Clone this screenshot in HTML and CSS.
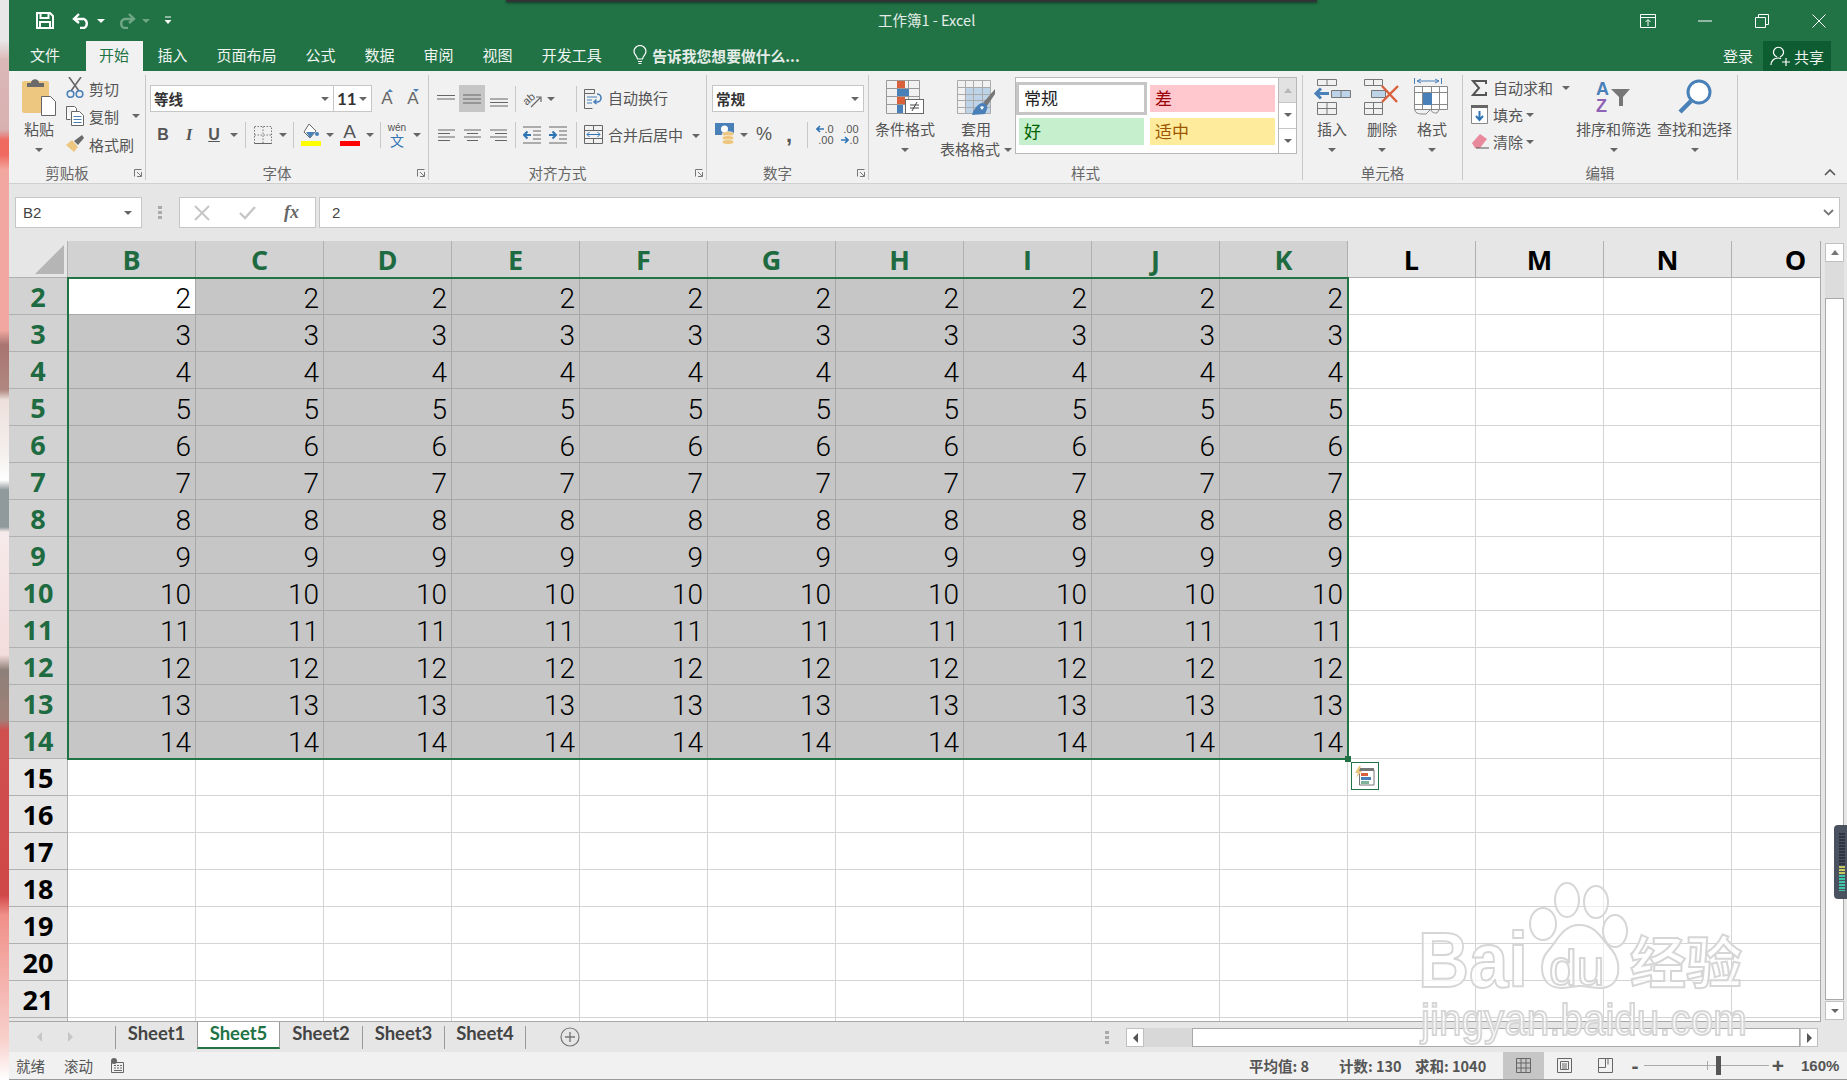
FILE: index.html
```html
<!DOCTYPE html>
<html lang="zh-CN">
<head>
  <meta charset="UTF-8" />
  <title>工作簿1 - Excel</title>
  <link rel="stylesheet" href="styles.css">
</head>
<body>
  <div class="desktop-strip"></div>

  <div class="app">
    <div class="titlebar">
      <div class="qat">
        <svg class="qat-save" width="18" height="17" viewBox="0 0 18 17"><path d="M1 1h13l3 3v12H1z M4.500 1v5h8V1 M4 16v-6h10v6" fill="none" stroke="#fff" stroke-width="2"/></svg>
        <svg class="qat-undo" width="19" height="16" viewBox="0 0 19 16"><path d="M7 1L2 6l5 4M3 6h9a5 5 0 0 1 0 9H8" fill="none" stroke="#fff" stroke-width="2.400"/></svg>
        <span class="caret caret-white qat-caret"></span>
        <svg class="qat-redo" width="19" height="16" viewBox="0 0 19 16"><path d="M12 1l5 5-5 4M16 6H7a5 5 0 0 0 0 9h4" fill="none" stroke="#6fa686" stroke-width="2.400"/></svg>
        <span class="caret caret-dim qat-caret"></span>
        <svg class="qat-more" width="8" height="9" viewBox="0 0 8 9"><path d="M1 1h6" stroke="#fff"/><path d="M0.500 4h7L4 8z" fill="#fff"/></svg>
      </div>
      <div class="doc-title">工作簿1 - Excel</div>
      <div class="win-controls">
        <span class="win-btn"><svg width="16" height="14" viewBox="0 0 16 14"><path d="M.5.500h15v13H.5zM.5 3.500h15M8 12V6M5.500 8L8 5.500 10.500 8" fill="none" stroke="#fff"/></svg></span>
        <span class="win-btn"><svg width="14" height="2" viewBox="0 0 14 2"><path d="M0 1h14" stroke="#fff"/></svg></span>
        <span class="win-btn"><svg width="14" height="14" viewBox="0 0 14 14"><path d="M.5 3.500h10v10H.5zM3.500 3.500v-3h10v10h-3" fill="none" stroke="#fff"/></svg></span>
        <span class="win-btn"><svg width="14" height="14" viewBox="0 0 14 14"><path d="M.5.500l13 13M13.500.500l-13 13" fill="none" stroke="#fff"/></svg></span>
      </div>
    </div>

    <div class="tabs">
      <span class="tab tab-file">文件</span>
      <span class="tab tab-active">开始</span>
      <span class="tab">插入</span>
      <span class="tab">页面布局</span>
      <span class="tab">公式</span>
      <span class="tab">数据</span>
      <span class="tab">审阅</span>
      <span class="tab">视图</span>
      <span class="tab">开发工具</span>
      <span class="tell">
        <svg width="14" height="20" viewBox="0 0 14 20"><path d="M4.500 14C4 11 1 9.500 1 6.500a6 6 0 0 1 12 0c0 3-3 4.500-3.500 7.500zM5 16.500h4M5.500 18.500h3" fill="none" stroke="#fff" stroke-width="1.200"/></svg>
        告诉我您想要做什么...
      </span>
      <span class="signin">登录</span>
      <span class="share">
        <svg width="21" height="20" viewBox="0 0 21 20"><path d="M7 11a5 5 0 1 1 3 0M1 19c0-4 3-7 7-7 1 0 2 .2 3 .6M12 16h8M16 12v8" fill="none" stroke="#fff" stroke-width="1.200"/></svg>
        共享
      </span>
    </div>

    <div class="ribbon">
      <section class="group group-clipboard">
        <div class="group-body clipboard-body">
          <div class="big big-paste">
            <div class="big-ico">
              <svg width="35" height="40" viewBox="0 0 35 40"><rect x="0" y="4" width="27" height="32" rx="2" fill="#edc67f"/><path d="M5 10V6h4c0-5 8-5 8 0h5v4z" fill="#6a6a6a"/><path d="M19.500 19.500h9l5 5v14h-14z" fill="#fff" stroke="#666"/></svg>
            </div>
            <div class="big-label">粘贴</div>
            <div class="big-label"><span class="caret"></span></div>
          </div>
          <div class="small-col">
            <div class="small-row">
              <span class="small-ico"><svg width="18" height="22" viewBox="0 0 18 22"><path d="M3 0l10 14M15 0L5 14" stroke="#666" stroke-width="1.600" fill="none"/><circle cx="4.500" cy="17" r="3.300" fill="none" stroke="#4a80b8" stroke-width="1.600"/><circle cx="13.500" cy="17" r="3.300" fill="none" stroke="#4a80b8" stroke-width="1.600"/></svg></span>
              剪切
            </div>
            <div class="small-row">
              <span class="small-ico"><svg width="18" height="20" viewBox="0 0 18 20"><path d="M.5.500h8l2 2v3M.5.500v13h4" fill="#fff" stroke="#666"/><path d="M5.500 5.500h8l4 4v10h-12z" fill="#fff" stroke="#666"/><path d="M7.500 10.500h8M7.500 13.500h8M7.500 16.500h8" stroke="#4a80b8"/></svg></span>
              复制<span class="caret caret-after"></span>
            </div>
            <div class="small-row">
              <span class="small-ico"><svg width="18" height="18" viewBox="0 0 18 18"><path d="M0 10l6-5 6 7-4 5z" fill="#edc67f"/><path d="M8 6l8-6 2 3-6 7z" fill="#6a6a6a"/></svg></span>
              格式刷
            </div>
          </div>
        </div>
        <div class="group-label group-label-launch">剪贴板<svg class="launcher" width="8" height="8" viewBox="0 0 8 8"><path d="M.5 7.500v-7h7M7.500 3v4.500H3M3 3l4 4" fill="none" stroke="#777"/></svg></div>
      </section>

      <section class="group group-font">
        <div class="group-body">
          <div class="font-row1">
            <div class="combo combo-font">等线<span class="caret"></span></div>
            <div class="combo combo-size">11<span class="caret"></span></div>
            <span class="grow-font">A<i class="tip tip-up"></i></span>
            <span class="grow-font">A<i class="tip tip-down"></i></span>
          </div>
          <div class="font-row2">
            <span class="fmt fmt-b">B</span>
            <span class="fmt fmt-i">I</span>
            <span class="fmt fmt-u">U</span>
            <span class="caret"></span>
            <span class="vsep"></span>
            <svg width="18" height="18" viewBox="0 0 18 18"><path d="M.5.500h17v17H.5zM9 .5v17M.5 9h17" fill="none" stroke="#777" stroke-dasharray="1.500 1.500"/><path d="M.5 17.500h17" stroke="#666"/></svg>
            <span class="caret"></span>
            <span class="vsep"></span>
            <svg width="20" height="23" viewBox="0 0 20 23"><path d="M8 1l7 7-6 7-6-6z" fill="#fff" stroke="#666"/><path d="M5 9h9l-5 6z" fill="#4a80b8"/><circle cx="16" cy="11" r="2" fill="#4a80b8"/><rect y="18" width="20" height="5" fill="#ffff00"/></svg>
            <span class="caret"></span>
            <span class="font-color">A<i></i></span>
            <span class="caret"></span>
            <span class="vsep"></span>
            <span class="wen"><em>wén</em><b>文</b></span>
            <span class="caret"></span>
          </div>
        </div>
        <div class="group-label group-label-launch">字体<svg class="launcher" width="8" height="8" viewBox="0 0 8 8"><path d="M.5 7.500v-7h7M7.500 3v4.500H3M3 3l4 4" fill="none" stroke="#777"/></svg></div>
      </section>

      <section class="group group-align">
        <div class="group-body align-grid">
          <svg width="18" height="8" viewBox="0 0 18 8"><path d="M0 .5h18M0 4h18" stroke="#666"/></svg>
          <span class="align-on"><svg width="18" height="10" viewBox="0 0 18 10"><path d="M0 1h18M0 5h18M0 9h18" stroke="#666"/></svg></span>
          <svg class="align-low" width="18" height="9" viewBox="0 0 18 9"><path d="M0 1h18M0 4.500h18M0 8h18" stroke="#666"/></svg>
          <span class="vsep"></span>
          <svg class="orient" width="20" height="20" viewBox="0 0 20 20"><text x="1" y="13" class="orient-text" transform="rotate(-40 8 10)">ab</text><path d="M9 18l9-9M14 8h5v5" fill="none" stroke="#666" stroke-width="1.200"/></svg>
          <span class="caret caret-near"></span>
          <span></span>
          <span class="vsep"></span>
          <svg width="18" height="20" viewBox="0 0 18 20"><path d="M.5.500h10v4h-10zM.5 4.500v15h8" fill="none" stroke="#666"/><path d="M3 8h10M3 11h5M3 14h5" stroke="#4a80b8"/><path d="M13 5a4 4 0 0 1 0 8h-2M12.500 10.500L10 13l2.500 2" fill="none" stroke="#4a80b8" stroke-width="1.600"/></svg>
          <span class="align-label align-label-top">自动换行</span>

          <svg width="17" height="12" viewBox="0 0 17 12"><path d="M0 1h17M0 4.500h12M0 8h17M0 11.500h12" stroke="#666"/></svg>
          <svg width="17" height="12" viewBox="0 0 17 12"><path d="M0 1h17M3 4.500h11M0 8h17M3 11.500h11" stroke="#666"/></svg>
          <svg width="17" height="12" viewBox="0 0 17 12"><path d="M0 1h17M5 4.500h12M0 8h17M5 11.500h12" stroke="#666"/></svg>
          <span class="vsep"></span>
          <svg width="18" height="18" viewBox="0 0 18 18"><path d="M0 1h18M10 5h8M10 9h8M10 13h8M0 17h18" stroke="#666"/><path d="M8 9H1M4.500 5.500L1 9l3.500 3.500" fill="none" stroke="#2f75b5" stroke-width="2"/></svg>
          <svg width="18" height="18" viewBox="0 0 18 18"><path d="M0 1h18M0 5h8M0 9h8M0 13h8M0 17h18" transform="translate(18 0) scale(-1 1)" stroke="#666"/><path d="M0 9h7M3.500 5.500L7 9l-3.500 3.500" fill="none" stroke="#2f75b5" stroke-width="2"/></svg>
          <span></span>
          <span class="vsep"></span>
          <svg width="19" height="19" viewBox="0 0 19 19"><path d="M.5.500h18v18H.5zM.5 5.500h18M.5 13.500h18M9.500.5v5M9.500 13.500v5" fill="none" stroke="#666"/><path d="M3 9.500h13M5.500 7L3 9.500 5.500 12M13.500 7l2.500 2.500-2.500 2.500" fill="none" stroke="#2f75b5"/></svg>
          <span class="align-label">合并后居中<span class="caret caret-merge"></span></span>
        </div>
        <div class="group-label group-label-launch">对齐方式<svg class="launcher" width="8" height="8" viewBox="0 0 8 8"><path d="M.5 7.500v-7h7M7.500 3v4.500H3M3 3l4 4" fill="none" stroke="#777"/></svg></div>
      </section>

      <section class="group group-number">
        <div class="group-body">
          <div class="combo combo-number">常规<span class="caret"></span></div>
          <div class="number-row">
            <svg width="20" height="23" viewBox="0 0 20 23"><rect x="0" y="0" width="19" height="12" fill="#4a80b8"/><circle cx="9.500" cy="6" r="3.500" fill="#fff"/><g fill="#edc67f" stroke="#fff" stroke-width=".5"><ellipse cx="13" cy="11" rx="6" ry="2.500"/><ellipse cx="13" cy="15" rx="6" ry="2.500"/><ellipse cx="13" cy="19" rx="6" ry="2.500"/></g></svg>
            <span class="caret"></span>
            <span class="percent">%</span>
            <span class="comma">,</span>
            <span class="vsep"></span>
            <span class="decimal"><i><svg width="8" height="8" viewBox="0 0 8 8"><path d="M8 4H1M4 1L1 4l3 3" fill="none" stroke="#2f75b5" stroke-width="1.600"/></svg>.0</i><i>.00</i></span>
            <span class="decimal"><i>.00</i><i><svg width="8" height="8" viewBox="0 0 8 8"><path d="M0 4h7M4 1l3 3-3 3" fill="none" stroke="#2f75b5" stroke-width="1.600"/></svg>.0</i></span>
          </div>
        </div>
        <div class="group-label group-label-launch">数字<svg class="launcher" width="8" height="8" viewBox="0 0 8 8"><path d="M.5 7.500v-7h7M7.500 3v4.500H3M3 3l4 4" fill="none" stroke="#777"/></svg></div>
      </section>

      <section class="group group-styles">
        <div class="group-body styles-body">
          <div class="big big-cond">
            <div class="big-ico">
              <svg width="38" height="34" viewBox="0 0 38 34"><path d="M.5.500h33v33H.5zM.5 8.500h33M.5 16.500h33M.5 24.500h33M11.500.5v33M22.500.5v33" fill="none" stroke="#999"/><rect x="11" y="1" width="8" height="7" fill="#d9603b"/><rect x="11" y="9" width="12" height="7" fill="#4a80b8"/><rect x="11" y="17" width="8" height="7" fill="#d9603b"/><rect x="11" y="25" width="6" height="8" fill="#4a80b8"/><rect x="19.500" y="19.500" width="18" height="14" fill="#fff" stroke="#666"/><path d="M24 25h9M24 28h9M31 22l-5 9" fill="none" stroke="#444"/></svg>
            </div>
            <div class="big-label">条件格式</div>
            <div class="big-label"><span class="caret"></span></div>
          </div>
          <div class="big big-table">
            <div class="big-ico">
              <svg width="38" height="35" viewBox="0 0 38 35"><rect x="8" y="7" width="25" height="27" fill="#bcd3e8"/><path d="M.5.500h33v33H.5zM.5 7.500h33M.5 14.500h33M.5 20.500h33M.5 27.500h33M8.500.5v33M16.500.5v33M25.500.5v33" fill="none" stroke="#aaa"/><path d="M38 9l-12 14 4 3L38 14z" fill="#777"/><path d="M15 35c2-7 6-11 10-12 4 0 6 3 5 6l-2 5z" fill="#4a80b8"/><path d="M23 27c1-1 3-1 4 0l-2 3z" fill="#fff"/></svg>
            </div>
            <div class="big-label">套用</div>
            <div class="big-label">表格格式<span class="caret caret-after-tight"></span></div>
          </div>
          <div class="gallery">
            <div class="gallery-cells">
              <span class="style-cell style-normal">常规</span>
              <span class="style-cell style-bad">差</span>
              <span class="style-cell style-good">好</span>
              <span class="style-cell style-neutral">适中</span>
            </div>
            <div class="gallery-scroll">
              <span class="gallery-btn gallery-btn-off"><i class="caret caret-up"></i></span>
              <span class="gallery-btn"><i class="caret"></i></span>
              <span class="gallery-btn"><i class="caret caret-bar"></i></span>
            </div>
          </div>
        </div>
        <div class="group-label">样式</div>
      </section>

      <section class="group group-cells">
        <div class="group-body cells-body">
          <div class="big big-cell">
            <div class="big-ico">
              <svg width="38" height="36" viewBox="0 0 38 36"><path d="M4.500.5h19v6h-19zM14 .5v6M4.500 23.500h19v12h-19zM4.500 29.500h19M14 23.500v12" fill="none" stroke="#777"/><path d="M18.500 11.500h19v7h-19zM28 11.500v7" fill="#bcd3e8" stroke="#777"/><path d="M16 14.500H3M8 9.500l-5 5 5 5" fill="none" stroke="#4a80b8" stroke-width="3"/></svg>
            </div>
            <div class="big-label">插入</div>
            <div class="big-label"><span class="caret"></span></div>
          </div>
          <div class="big big-cell">
            <div class="big-ico">
              <svg width="38" height="36" viewBox="0 0 38 36"><path d="M1.500.5h18v6h-18zM10.500.5v6M1.500 23.500h18v12h-18zM1.500 29.500h18M10.500 23.500v12" fill="none" stroke="#777"/><path d="M8.500 11.500h14v7h-14z" fill="#bcd3e8" stroke="#777"/><path d="M19 7l15 16M35 7L19 23" fill="none" stroke="#d9603b" stroke-width="2.400"/></svg>
            </div>
            <div class="big-label">删除</div>
            <div class="big-label"><span class="caret"></span></div>
          </div>
          <div class="big big-cell">
            <div class="big-ico">
              <svg width="36" height="38" viewBox="0 0 36 38"><path d="M.5 0v6M27.500 0v6M3 3h22M7 1L3 3l4 2M21 1l4 2-4 2" fill="none" stroke="#4a80b8"/><path d="M.5 8.500h33v23H.5zM.5 14.500h33M.5 26.500h33M8.500 8.500v23M17.500 8.500v23M25.500 8.500v23" fill="#fff" stroke="#888"/><rect x="9" y="15" width="9" height="12" fill="#4a80b8"/><path d="M1 32c0 4 6 4 8 4h3l4-4M17 32c1 3 4 3 6 3l2-3" fill="none" stroke="#888"/></svg>
            </div>
            <div class="big-label">格式</div>
            <div class="big-label"><span class="caret"></span></div>
          </div>
        </div>
        <div class="group-label">单元格</div>
      </section>

      <section class="group group-edit">
        <div class="group-body edit-body">
          <div class="edit-col">
            <div class="small-row">
              <span class="edit-ico"><svg width="16" height="16" viewBox="0 0 16 16"><path d="M15 4V1H2l6 7-6 7h13v-3" fill="none" stroke="#555" stroke-width="2"/></svg></span>
              自动求和<span class="caret caret-sum"></span>
            </div>
            <div class="small-row">
              <span class="edit-ico"><svg width="17" height="19" viewBox="0 0 17 19"><path d="M.5.500h16v18H.5z" fill="#fff" stroke="#888"/><rect width="17" height="3" fill="#666"/><path d="M8.500 6v9M5 11l3.500 4 3.500-4" fill="none" stroke="#2f75b5" stroke-width="2"/></svg></span>
              填充<span class="caret caret-tight"></span>
            </div>
            <div class="small-row">
              <span class="edit-ico"><svg width="18" height="17" viewBox="0 0 18 17"><path d="M1 10l8-9 7 5-7 9H4z" fill="#e98a9c"/><path d="M5 15h13" stroke="#555"/></svg></span>
              清除<span class="caret caret-tight"></span>
            </div>
          </div>
          <div class="big big-edit">
            <div class="big-ico">
              <svg width="36" height="34" viewBox="0 0 36 34"><text x="0" y="15" class="sort-a">A</text><text x="0" y="32" class="sort-z">Z</text><path d="M15 9h19l-7 8v9h-4v-9z" fill="#777"/></svg>
            </div>
            <div class="big-label">排序和筛选</div>
            <div class="big-label"><span class="caret"></span></div>
          </div>
          <div class="big big-edit big-find">
            <div class="big-ico">
              <svg width="36" height="36" viewBox="0 0 36 36"><circle cx="22" cy="13" r="11" fill="#fff" stroke="#4a80b8" stroke-width="3"/><path d="M14 22L3 33" stroke="#4a80b8" stroke-width="4.500"/></svg>
            </div>
            <div class="big-label">查找和选择</div>
            <div class="big-label"><span class="caret"></span></div>
          </div>
        </div>
        <div class="group-label">编辑</div>
      </section>

      <svg class="collapse" width="12" height="7" viewBox="0 0 12 7"><path d="M1 6l5-5 5 5" fill="none" stroke="#555" stroke-width="1.600"/></svg>
    </div>

    <div class="formula-bar">
      <div class="name-box">B2<span class="caret"></span></div>
      <div class="grip"></div>
      <div class="fx-box">
        <svg width="16" height="16" viewBox="0 0 16 16"><path d="M1 1l14 14M15 1L1 15" stroke="#c6c6c6" stroke-width="2"/></svg>
        <svg width="17" height="14" viewBox="0 0 17 14"><path d="M1 7l5 5L16 1" fill="none" stroke="#c6c6c6" stroke-width="2.400"/></svg>
        <span class="fx">fx</span>
      </div>
      <div class="formula-input">2<svg class="formula-chevron" width="11" height="7" viewBox="0 0 11 7"><path d="M1 1l4.500 4.500L10 1" fill="none" stroke="#777" stroke-width="1.800"/></svg></div>
    </div>

    <div class="sheet">
      <div class="grid-wrap">
        <div class="grid" id="grid"></div>
        <div class="quick-analysis">
          <svg width="20" height="20" viewBox="0 0 20 20"><path d="M4.500 4h14.500v15H4.500z" fill="#fff" stroke="#777"/><rect x="4" y="2" width="15" height="3" fill="#777"/><rect x="6" y="7" width="7" height="3" fill="#d9603b"/><rect x="6" y="11" width="10" height="3" fill="#4a80b8"/><rect x="6" y="15" width="8" height="3" fill="#7fb29b"/><path d="M4 0L0 7h3l-2 5 6-7H4l2-5z" fill="#edc67f"/></svg>
        </div>
      </div>
      <div class="vscroll">
        <span class="sb-btn"><i class="caret caret-up"></i></span>
        <span class="sb-track"></span>
        <span class="sb-thumb"></span>
        <span class="sb-btn sb-btn-down"><i class="caret"></i></span>
      </div>
    </div>

    <div class="tabbar">
      <div class="sheet-nav">
        <i class="nav-arrow nav-left"></i>
        <i class="nav-arrow nav-right"></i>
      </div>
      <span class="sheet-tab">Sheet1</span>
      <span class="sheet-tab sheet-tab-active">Sheet5</span>
      <span class="sheet-tab">Sheet2</span>
      <span class="sheet-tab">Sheet3</span>
      <span class="sheet-tab sheet-tab-last">Sheet4</span>
      <svg class="add-sheet" width="20" height="20" viewBox="0 0 20 20"><circle cx="10" cy="10" r="9" fill="none" stroke="#777" stroke-width="1.200"/><path d="M10 5v10M5 10h10" stroke="#777" stroke-width="1.400"/></svg>
      <div class="h-grip"></div>
      <div class="hscroll">
        <span class="h-btn"><i class="nav-arrow nav-left nav-dark"></i></span>
        <span class="h-track"></span>
        <span class="h-thumb"></span>
        <span class="h-btn"><i class="nav-arrow nav-right nav-dark"></i></span>
      </div>
    </div>

    <div class="status">
      <span class="st-ready">就绪</span>
      <span class="st-scroll">滚动</span>
      <svg class="st-macro" width="13" height="15" viewBox="0 0 13 15"><circle cx="3" cy="3" r="3" fill="#666"/><path d="M.5 4.500h12v10H.5zM3 7.500h2M6 7.500h2M9 7.500h2M3 10h2M6 10h2M9 10h2M3 12.500h8" fill="none" stroke="#666"/></svg>
      <span class="stat stat-avg">平均值: 8</span>
      <span class="stat stat-count">计数: 130</span>
      <span class="stat stat-sum">求和: 1040</span>
      <span class="view-btn view-on"><svg width="15" height="15" viewBox="0 0 15 15"><path d="M.5.500h14v14H.5zM5 .5v14M10 .5v14M.5 5h14M.5 10h14" fill="none" stroke="#666"/></svg></span>
      <span class="view-btn"><svg width="15" height="15" viewBox="0 0 15 15"><path d="M.5.500h14v14H.5zM3.500 3.500h8v8h-8zM5 6h5M5 8h5M5 10h5" fill="none" stroke="#666"/></svg></span>
      <span class="view-btn"><svg width="15" height="15" viewBox="0 0 15 15"><path d="M.5.500h14v14H.5zM.5 9.500h7v-9M10 .5v6" fill="none" stroke="#666"/></svg></span>
      <span class="zoom-btn">-</span>
      <span class="slider"><i class="slider-tick"></i><i class="slider-thumb"></i></span>
      <span class="zoom-btn">+</span>
      <span class="zoom-pct">160%</span>
    </div>
  </div>

  <div class="top-shadow"></div>

  <div class="audio-widget"><i class="audio-bars"></i></div>

  <svg class="watermark" width="400" height="190" viewBox="0 0 400 190">
    <g class="wm-shape">
      <ellipse cx="167" cy="25" rx="12" ry="17"/>
      <ellipse cx="196" cy="27" rx="12" ry="16"/>
      <ellipse cx="143" cy="49" rx="13" ry="16"/>
      <ellipse cx="215" cy="56" rx="12" ry="16"/>
      <path d="M179 50c-16 0-22 16-31 26-10 10-9 37 13 37 8 0 12-2 19-2s12 2 20 2c22 0 22-26 12-38-10-10-15-25-33-25z"/>
    </g>
    <text class="wm-text wm-bai" x="18" y="112" textLength="110" lengthAdjust="spacingAndGlyphs">Bai</text>
    <text class="wm-text wm-du" x="149" y="110">du</text>
    <text class="wm-text wm-cn" x="230" y="108">经验</text>
    <text class="wm-text wm-url" x="21" y="160" textLength="326" lengthAdjust="spacingAndGlyphs">jingyan.baidu.com</text>
  </svg>

  <script src="grid.js"></script>
</body>
</html>
```

FILE: styles.css
```css
* {
  box-sizing: border-box;
}

body {
  margin: 0;
  width: 1847px;
  height: 1080px;
  overflow: hidden;
  display: flex;
  position: relative;
  font-family: "Noto Sans CJK SC", sans-serif;
  font-size: 15px;
  color: #555;
  background: #fff;
}

.desktop-strip {
  width: 9px;
  flex: none;
  background: linear-gradient(180deg,
    #e8e8e8 0, #e8e8e8 40px, #dcb8b8 60px, #d8b0b0 130px, #f06a60 140px, #f06a60 155px,
    #f2a8a0 170px, #f2a8a0 330px, #a87470 345px, #b08880 390px, #eee0dc 400px, #f4f0ee 455px,
    #ffffff 480px, #90999c 490px, #90999c 527px, #f6eaea 532px, #f4dcdc 655px, #8c8078 670px,
    #a08078 720px, #d05050 730px, #d04848 895px, #f09088 915px, #f8d0cc 1040px, #ffffff 1080px);
}

.app {
  flex: 1;
  display: flex;
  flex-direction: column;
  min-width: 0;
}

/* caret */
.caret {
  display: inline-block;
  width: 0;
  height: 0;
  border-left: 4px solid transparent;
  border-right: 4px solid transparent;
  border-top: 4px solid #666;
}

.caret-white { border-top-color: #fff; }
.caret-dim { border-top-color: #6fa686; }
.caret-up { border-top: 0; border-bottom: 5px solid #777; }
.caret-after { margin-left: 13px; }
.caret-after-tight { margin-left: 4px; vertical-align: 3px; }
.caret-sum { margin-left: 9px; vertical-align: 3px; }
.caret-tight { margin-left: 3px; vertical-align: 3px; }

/* title bar */
.titlebar {
  height: 41px;
  flex: none;
  display: flex;
  align-items: center;
  background: #217346;
}

.qat {
  width: 869px;
  flex: none;
  display: flex;
  align-items: center;
  padding-left: 27px;
}

.qat-undo { margin-left: 18px; }
.qat-caret { margin-left: 6px; }
.qat-redo { margin-left: 12px; }
.qat-more { margin-left: 14px; }

.doc-title {
  color: #e4ece7;
  font-size: 14.500px;
  margin-bottom: 2px;
}

.win-controls {
  margin-left: auto;
  display: flex;
}

.win-btn {
  width: 57px;
  height: 30px;
  display: flex;
  align-items: center;
  justify-content: center;
}

/* tab row */
.tabs {
  height: 30px;
  flex: none;
  display: flex;
  align-items: center;
  background: #217346;
  color: #f0f5f2;
  padding-left: 7px;
}

.tab {
  height: 30px;
  line-height: 28px;
  padding: 0 14.5px;
}

.tab-file { padding: 0 14px; margin-right: 12px; }

.tab-active {
  background: #f1f1f1;
  color: #217346;
  padding: 0 14px 0 13px;
}

.tell {
  margin-left: 17px;
  margin-top: -2px;
  display: flex;
  align-items: center;
  gap: 5px;
  font-size: 14.800px;
  font-weight: 700;
  color: #e4ece7;
}

.signin {
  margin-left: auto;
  margin-right: 10px;
  margin-top: -2px;
}

.share {
  width: 68px;
  height: 30px;
  margin-right: 16px;
  background: #0e5c32;
  display: flex;
  align-items: center;
  justify-content: center;
  gap: 3px;
  white-space: nowrap;
}

/* ribbon */
.ribbon {
  height: 113px;
  flex: none;
  display: flex;
  align-items: flex-start;
  background: #f1f1f1;
  border-bottom: 1px solid #d0d0d0;
  position: relative;
}

.group {
  margin-top: 4px;
  height: 105px;
  flex: none;
  display: flex;
  flex-direction: column;
  border-right: 1px solid #c8c8c8;
  position: relative;
}

.group-body {
  height: 90px;
  flex: none;
}

.group-label {
  height: 15px;
  line-height: 15px;
  text-align: center;
  color: #666;
  font-size: 14.500px;
  position: relative;
}

.group-label-launch { padding-right: 20px; }

.launcher {
  position: absolute;
  right: 3px;
  top: 4px;
}

.group-clipboard { width: 137px; }
.group-font { width: 283px; padding-left: 4px; }
.group-align { width: 278px; padding-left: 4px; }
.group-number { width: 162px; padding-left: 4px; }
.group-styles { width: 434px; }
.group-cells { width: 160px; }
.group-edit { width: 275px; }

.group-font .group-label-launch,
.group-align .group-label-launch,
.group-number .group-label-launch { padding-right: 24px; }

.vsep {
  width: 1px;
  height: 26px;
  background: #c8c8c8;
}

.big {
  display: flex;
  flex-direction: column;
  align-items: center;
  flex: none;
}

.big-ico {
  height: 44px;
  display: flex;
  align-items: center;
  justify-content: center;
}

.big-label {
  height: 20px;
  line-height: 20px;
  white-space: nowrap;
}

.big-label .caret {
  vertical-align: 3px;
}

.clipboard-body {
  display: flex;
  padding-left: 5px;
}

.big-paste { width: 50px; }

.small-col {
  display: flex;
  flex-direction: column;
  margin-top: -1px;
}

.small-row {
  height: 28px;
  display: flex;
  align-items: center;
  white-space: nowrap;
}

.small-ico {
  width: 22px;
  margin-right: 3px;
  display: flex;
  justify-content: center;
}

/* font group */
.combo {
  height: 27px;
  background: #fff;
  border: 1px solid #c6c6c6;
  color: #333;
  display: flex;
  align-items: center;
  justify-content: space-between;
  padding: 0 4px 0 3px;
  font-weight: 700;
  font-size: 14.500px;
}

.font-row1 {
  display: grid;
  grid-template-columns: 184px 38px 30px 22px;
  align-items: center;
  justify-items: center;
  margin-top: 10px;
}

.font-row1 .combo { justify-self: stretch; }
.combo-size { font-size: 17px; font-family: "Lato", sans-serif; border-left: 0; }

.grow-font {
  position: relative;
  font-family: "Liberation Sans", sans-serif;
  font-size: 17px;
  color: #666;
}

.tip {
  position: absolute;
  right: 0;
  top: 0;
  width: 0;
  height: 0;
  border-left: 3px solid transparent;
  border-right: 3px solid transparent;
}

.tip-up { border-bottom: 3px solid #4a80b8; }
.tip-down { border-top: 3px solid #4a80b8; }

.font-row2 {
  display: grid;
  grid-template-columns: 26px 26px 24px 16px 7px 27px 13px 8px 27px 12px 27px 13px 8px 26px 14px;
  align-items: center;
  justify-items: center;
  height: 27px;
  margin-top: 9px;
}

.fmt {
  font-family: "Liberation Sans", sans-serif;
  font-size: 16px;
  font-weight: 700;
  color: #555;
}

.fmt-i { font-style: italic; font-family: "Liberation Serif", serif; }
.fmt-u { text-decoration: underline; }

.font-color {
  display: flex;
  flex-direction: column;
  align-items: center;
  width: 20px;
  font-family: "Liberation Sans", sans-serif;
  font-size: 19px;
  line-height: 17px;
  color: #555;
}

.font-color i {
  width: 20px;
  height: 5px;
  background: #ff0000;
  margin-top: 1px;
}

.wen {
  display: flex;
  flex-direction: column;
  align-items: center;
}

.wen em {
  font-style: normal;
  font-family: "Liberation Sans", sans-serif;
  font-size: 10px;
  line-height: 10px;
  color: #555;
}

.wen b {
  font-weight: 400;
  font-size: 14px;
  line-height: 14px;
  color: #2f75b5;
}

/* alignment group */
.align-grid {
  display: grid;
  grid-template-columns: 26px 26px 27px 7px 26px 26px 2px 7px 26px 1fr;
  grid-template-rows: 27px 27px;
  row-gap: 9px;
  padding-top: 10px;
  height: 90px;
  align-items: center;
  justify-items: center;
}

.align-on {
  width: 26px;
  height: 27px;
  background: #c6c6c6;
  display: flex;
  align-items: center;
  justify-content: center;
}

.align-low { align-self: end; margin-bottom: 5px; }
.orient { overflow: visible; }

.orient-text {
  font-family: "Liberation Sans", sans-serif;
  font-size: 11px;
  fill: #555;
}

.caret-near { justify-self: start; margin-left: 2px; }

.align-label {
  justify-self: start;
  margin-left: 2px;
  white-space: nowrap;
}

.align-label-top { margin-top: -2px; }

.caret-merge { margin-left: 9px; vertical-align: 3px; }

/* number group */
.combo-number {
  width: 152px;
  margin: 10px 0 0 1px;
}

.number-row {
  display: grid;
  grid-template-columns: 26px 12px 28px 22px 14px 22px 28px;
  height: 27px;
  margin: 9px 0 0 1px;
  align-items: center;
  justify-items: center;
}

.percent {
  font-family: "Liberation Sans", sans-serif;
  font-size: 18px;
  color: #555;
}

.comma {
  font-family: "Liberation Sans", sans-serif;
  font-size: 22px;
  font-weight: 700;
  line-height: 16px;
  color: #555;
}

.decimal {
  display: flex;
  flex-direction: column;
  align-items: flex-end;
  font-family: "Liberation Sans", sans-serif;
  font-size: 11px;
  line-height: 11px;
  color: #555;
}

.decimal i { font-style: normal; }

/* styles group */
.styles-body {
  display: flex;
  padding-left: 1px;
}

.big-cond { width: 70px; }
.big-table { width: 72px; }

.gallery {
  display: flex;
  margin: 2px 0 0 3px;
  height: 77px;
}

.gallery-cells {
  width: 264px;
  background: #fff;
  border: 1px solid #b8b8b8;
  display: grid;
  grid-template-columns: 125px 125px;
  grid-template-rows: 27px 27px;
  gap: 6px;
  padding: 7px 3px;
}

.style-cell {
  padding-left: 5px;
  font-size: 17px;
  line-height: 26px;
}

.style-normal { background: #fff; color: #222; outline: 3px solid #c6c6c6; }
.style-bad { background: #ffc7ce; color: #9c0006; }
.style-good { background: #c6efce; color: #006100; }
.style-neutral { background: #ffeb9c; color: #9c5700; }

.gallery-scroll {
  width: 18px;
  display: flex;
  flex-direction: column;
  border: 1px solid #b8b8b8;
  border-left: 0;
}

.gallery-btn {
  flex: 1;
  background: #fff;
  border-bottom: 1px solid #c6c6c6;
  display: flex;
  align-items: center;
  justify-content: center;
}

.gallery-btn:last-child { border-bottom: 0; }
.gallery-btn-off { background: #e2e2e2; }
.gallery-btn-off .caret-up { border-bottom-color: #b8b8b8; }
.caret-bar { box-shadow: 0 -3px 0 -2px #666; }

/* cells group */
.cells-body {
  display: flex;
  padding-left: 4px;
}

.big-cell { width: 50px; }

/* editing group */
.edit-body {
  display: flex;
  padding-left: 8px;
}

.edit-col {
  width: 105px;
  flex: none;
  margin-top: -1px;
}

.edit-col .small-row { height: 27px; }

.edit-ico {
  width: 18px;
  margin-right: 4px;
  display: flex;
}

.big-edit { width: 75px; }
.big-find { margin-left: 6px; }

.sort-a, .sort-z {
  font-family: "Liberation Sans", sans-serif;
  font-size: 18px;
  font-weight: 700;
}

.sort-a { fill: #4a80b8; }
.sort-z { fill: #8e63b5; }

.collapse {
  position: absolute;
  right: 11px;
  top: 98px;
}

/* formula bar */
.formula-bar {
  height: 57px;
  flex: none;
  display: flex;
  background: #e6e6e6;
  padding: 13px 7px 0 6px;
}

.name-box, .fx-box, .formula-input {
  height: 31px;
  background: #fff;
  border: 1px solid #c6c6c6;
  display: flex;
  align-items: center;
  font-family: "Liberation Sans", sans-serif;
  font-size: 15px;
  color: #444;
}

.name-box {
  width: 127px;
  padding: 0 9px 0 7px;
  justify-content: space-between;
}

.grip {
  width: 4px;
  height: 14px;
  margin: 9px 17px 0 16px;
  background: repeating-linear-gradient(180deg, #aaa 0, #aaa 3px, transparent 3px, transparent 5px);
}

.fx-box {
  width: 137px;
  padding: 0 16px 0 14px;
  justify-content: space-between;
}

.fx {
  font-family: "Liberation Serif", serif;
  font-size: 18px;
  font-style: italic;
  font-weight: 700;
  color: #666;
}

.formula-input {
  flex: 1;
  margin-left: 3px;
  padding-left: 12px;
  position: relative;
}

.formula-chevron {
  position: absolute;
  right: 5px;
  top: 11px;
}

/* sheet */
.sheet {
  height: 781px;
  flex: none;
  display: flex;
  background: #e6e6e6;
}

.grid-wrap {
  width: 1812px;
  flex: none;
  overflow: hidden;
  position: relative;
  background: #fff;
  border-right: 1px solid #a8a8a8;
  border-bottom: 1px solid #a8a8a8;
}

.grid {
  display: grid;
  grid-template-columns: 59px repeat(14, 128px);
  grid-auto-rows: 37px;
  width: 1851px;
  position: relative;
}

.corner {
  background: #e6e6e6;
  border-right: 1px solid #b0b0b0;
  border-bottom: 1px solid #b0b0b0;
  position: relative;
}

.corner::after {
  content: "";
  position: absolute;
  right: 3px;
  bottom: 3px;
  width: 0;
  height: 0;
  border-left: 29px solid transparent;
  border-bottom: 29px solid #b5b5b5;
}

.head {
  display: flex;
  align-items: center;
  justify-content: center;
  background: #e6e6e6;
  color: #000;
  border-right: 1px solid #b0b0b0;
  border-bottom: 1px solid #b0b0b0;
  font-family: "Open Sans", sans-serif;
  font-size: 27px;
  font-weight: 700;
  line-height: 1;
}

.head-row {
  padding-top: 1px;
}

.head-on {
  background: #d2d2d2;
  color: #1e6b41;
}

.cell {
  display: flex;
  align-items: flex-end;
  justify-content: flex-end;
  padding: 0 4px 0 0;
  border-right: 1px solid #d4d4d4;
  border-bottom: 1px solid #d4d4d4;
  font-family: "Roboto", sans-serif;
  font-size: 28px;
  font-weight: 300;
  line-height: 30px;
  color: #000;
}

.cell-on {
  background: #c6c6c6;
  border-color: #a8a8a8;
}

.cell-active {
  background: #fff;
}

/* absolute inside its grid area, so it stays out of the auto placement */
.selection {
  grid-column: 2 / 12;
  grid-row: 2 / 15;
  position: absolute;
  left: -1px;
  top: -1px;
  right: -1px;
  bottom: -1px;
  border: 2px solid #217346;
  pointer-events: none;
}

.selection::after {
  content: "";
  position: absolute;
  right: -4px;
  bottom: -4px;
  width: 6px;
  height: 6px;
  background: #217346;
}

.quick-analysis {
  position: absolute;
  left: 1342px;
  top: 521px;
  width: 28px;
  height: 28px;
  background: #fff;
  border: 1px solid #217346;
  display: flex;
  align-items: center;
  justify-content: center;
}

.vscroll {
  flex: 1;
  display: flex;
  flex-direction: column;
  padding: 2px 3px 2px 4px;
}

.sb-btn {
  height: 19px;
  flex: none;
  background: #fff;
  border: 1px solid #c0c0c0;
  display: flex;
  align-items: center;
  justify-content: center;
}

.sb-track {
  height: 36px;
  flex: none;
  background: #dcdcdc;
}

.sb-thumb {
  flex: 1;
  background: #fff;
  border: 1px solid #a8a8a8;
}

.sb-btn-down { margin-top: 1px; }

/* sheet tabs */
.tabbar {
  height: 30px;
  flex: none;
  display: flex;
  background: #e6e6e6;
}

.sheet-nav {
  width: 106px;
  flex: none;
  display: flex;
  align-items: center;
  gap: 26px;
  padding-left: 28px;
  height: 30px;
}

.nav-arrow {
  width: 0;
  height: 0;
  border-top: 5px solid transparent;
  border-bottom: 5px solid transparent;
}

.nav-left { border-right: 5px solid #c6c6c6; }
.nav-right { border-left: 5px solid #c6c6c6; }
.nav-dark { border-left-color: #555; border-right-color: #555; }

.sheet-tab {
  width: 82px;
  flex: none;
  height: 23px;
  margin-top: 4px;
  line-height: 14px;
  text-align: center;
  border-left: 1px solid #9a9a9a;
  font-family: "Lato", sans-serif;
  font-size: 18.500px;
  font-weight: 700;
  color: #444;
}

.sheet-tab-last {
  width: 82px;
  border-right: 1px solid #9a9a9a;
}

.sheet-tab-active {
  width: 83px;
  height: 27px;
  margin-top: 0;
  line-height: 22px;
  background: #fff;
  color: #217346;
  border-left: 1px solid #9a9a9a;
  border-right: 1px solid #9a9a9a;
  border-bottom: 2px solid #217346;
}

.sheet-tab-active + .sheet-tab { border-left: 0; }

.add-sheet {
  margin: 5px 0 0 34px;
  flex: none;
}

.h-grip {
  width: 4px;
  height: 14px;
  margin: 9px 17px 0 525px;
  flex: none;
  background: repeating-linear-gradient(180deg, #aaa 0, #aaa 3px, transparent 3px, transparent 5px);
}

.hscroll {
  width: 692px;
  height: 19px;
  margin-top: 6px;
  flex: none;
  display: flex;
}

.h-btn {
  width: 18px;
  flex: none;
  background: #fff;
  border: 1px solid #c0c0c0;
  display: flex;
  align-items: center;
  justify-content: center;
}

.h-track {
  width: 48px;
  flex: none;
  background: #d8d8d8;
}

.h-thumb {
  flex: 1;
  background: #fff;
  border: 1px solid #a8a8a8;
}

/* status bar */
.status {
  height: 28px;
  flex: none;
  display: flex;
  align-items: center;
  background: #f1f1f1;
  border-bottom: 1px solid #999;
  white-space: nowrap;
  font-size: 14.500px;
}

.st-ready { margin-left: 7px; }
.st-scroll { margin-left: 19px; }
.st-macro { margin-left: 18px; }

.stat {
  overflow: hidden;
  font-weight: 700;
  font-size: 14.500px;
  color: #555;
}

.stat-avg { margin-left: auto; width: 62px; }
.stat-count { margin-left: 28px; width: 63px; }
.stat-sum { margin-left: 13px; width: 72px; }

.view-btn {
  width: 41px;
  height: 27px;
  flex: none;
  display: flex;
  align-items: center;
  justify-content: center;
}

.stat-sum + .view-btn { margin-left: 16px; }
.view-on { background: #c6c6c6; }

.zoom-btn {
  width: 18px;
  flex: none;
  text-align: center;
  font-family: "Liberation Sans", sans-serif;
  font-size: 21px;
  font-weight: 700;
  line-height: 24px;
}

.slider {
  width: 125px;
  flex: none;
  height: 1px;
  background: #aaa;
  position: relative;
}

.slider-tick {
  position: absolute;
  left: 63px;
  top: -4px;
  width: 1px;
  height: 9px;
  background: #aaa;
}

.slider-thumb {
  position: absolute;
  left: 72px;
  top: -9px;
  width: 5px;
  height: 19px;
  background: #555;
}

.zoom-pct {
  margin-left: 14px;
  width: 46px;
  font-family: "Liberation Sans", sans-serif;
  font-weight: 700;
  font-size: 15px;
}

/* things lying over the window */
.top-shadow {
  position: absolute;
  left: 506px;
  top: 0;
  width: 811px;
  height: 2px;
  background: #2f3336;
  box-shadow: 0 1px 3px rgba(0, 0, 0, 0.6);
}

.audio-widget {
  position: absolute;
  left: 1834px;
  top: 825px;
  width: 13px;
  height: 74px;
  background: #4a5260;
  border-radius: 4px 0 0 4px;
  padding: 8px 2px 0 5px;
}

.audio-bars {
  display: block;
  height: 58px;
  background:
    repeating-linear-gradient(180deg, transparent 0, transparent 2px, #4a5260 2px, #4a5260 3px),
    linear-gradient(180deg, #2f3540 0, #2f3540 32px, #c8c860 32px, #c8c860 42px, #3ec8a8 42px, #3ec8a8 100%);
}

.watermark {
  position: absolute;
  left: 1400px;
  top: 875px;
  pointer-events: none;
  filter: blur(0.6px);
}

.wm-shape {
  fill: rgba(255, 255, 255, 0.55);
  stroke: #d6d6d6;
  stroke-width: 2;
}

.wm-text {
  fill: rgba(255, 255, 255, 0.7);
  stroke: #d6d6d6;
  stroke-width: 2;
}

.wm-bai {
  font-family: "Liberation Sans", sans-serif;
  font-weight: 700;
  font-size: 78px;
}

.wm-du {
  font-family: "Liberation Sans", sans-serif;
  font-size: 50px;
}

.wm-cn {
  font-family: "Noto Sans CJK SC", sans-serif;
  font-weight: 700;
  font-size: 56px;
}

.wm-url {
  font-family: "Liberation Sans", sans-serif;
  font-size: 44px;
}
```

FILE: grid.js
```js
const grid = document.getElementById('grid');
const cols = 'BCDEFGHIJKLMNO'.split('');

function addDiv(className, text) {
  const el = document.createElement('div');
  el.className = className;
  if (text !== undefined) el.textContent = text;
  grid.appendChild(el);
}

addDiv('corner');
cols.forEach((c, i) => addDiv(i < 10 ? 'head head-on' : 'head', c));

for (let row = 2; row <= 22; row++) {
  const selected = row <= 14;
  addDiv(selected ? 'head head-row head-on' : 'head head-row', row <= 21 ? row : '');
  cols.forEach((c, i) => {
    if (selected && i < 10) {
      addDiv(row === 2 && i === 0 ? 'cell cell-on cell-active' : 'cell cell-on', row);
    } else {
      addDiv('cell');
    }
  });
}

addDiv('selection');
```
